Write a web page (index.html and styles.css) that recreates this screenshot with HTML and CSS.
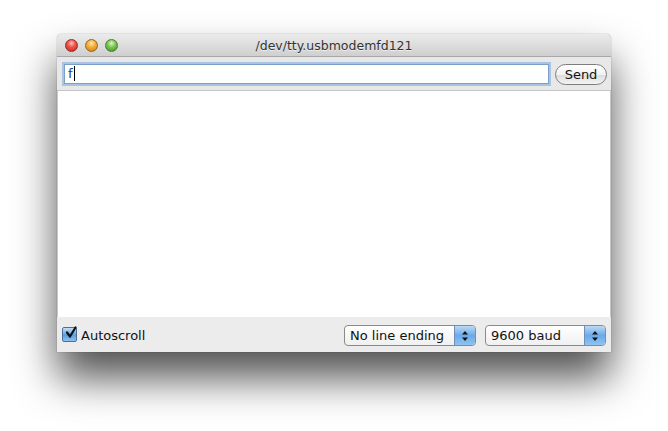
FILE: index.html
```html
<!DOCTYPE html>
<html>
<head>
<meta charset="utf-8">
<link rel="stylesheet" href="styles.css">
</head>
<body>
<div class="stage">
  <div class="window">
    <div class="titlebar">
      <div class="lights">
        <span class="light red"></span>
        <span class="light yellow"></span>
        <span class="light green"></span>
      </div>
      <div class="title">/dev/tty.usbmodemfd121</div>
    </div>
    <div class="toolbar">
      <div class="field"><span class="typed">f</span><span class="caret"></span></div>
      <div class="button">Send</div>
    </div>
    <div class="output"></div>
    <div class="statusbar">
      <label class="check">
        <span class="box"><svg width="14" height="14" viewBox="0 0 14 14"><path d="M3 6.5 L6 10.5 L11.5 1.5" fill="none" stroke="#111" stroke-width="2.2" stroke-linecap="round" stroke-linejoin="round"/></svg></span>
        <span class="check-label">Autoscroll</span>
      </label>
      <div class="spacer"></div>
      <div class="select wide"><span class="select-text">No line ending</span><span class="stepper"><svg width="8" height="12" viewBox="0 0 8 12"><path d="M4 1 L7 4.5 H1 Z M4 11 L7 7.5 H1 Z" fill="#111"/></svg></span></div>
      <div class="select narrow"><span class="select-text">9600 baud</span><span class="stepper"><svg width="8" height="12" viewBox="0 0 8 12"><path d="M4 1 L7 4.5 H1 Z M4 11 L7 7.5 H1 Z" fill="#111"/></svg></span></div>
    </div>
  </div>
</div>
</body>
</html>
```
FILE: styles.css
```css
html, body {
  margin: 0;
  padding: 0;
  background: #ffffff;
  width: 668px;
  height: 431px;
  overflow: hidden;
  font-family: "DejaVu Sans", "Liberation Sans", sans-serif;
}
.stage {
  padding: 34px 0 0 57px;
}
.window {
  width: 554px;
  height: 318px;
  display: flex;
  flex-direction: column;
  border-radius: 5px 5px 0 0;
  background: #e8e8e8;
  box-shadow: 0 26px 42px rgba(0,0,0,0.68), 0 0 1px rgba(0,0,0,0.6);
  overflow: hidden;
}
.titlebar {
  height: 22px;
  position: relative;
  background: linear-gradient(#ebebeb, #cfcfcf);
  border-bottom: 1px solid #a8a8a8;
  display: flex;
  align-items: center;
  justify-content: center;
}
.lights {
  position: absolute;
  left: 8px;
  top: 5px;
  display: flex;
  gap: 7px;
}
.light {
  width: 13px;
  height: 13px;
  border-radius: 50%;
  box-sizing: border-box;
}
.red { background: radial-gradient(circle at 50% 30%, #ffc0b8 0%, #f0564d 40%, #c0241a 100%); border: 1px solid #8e2a24; }
.yellow { background: radial-gradient(circle at 50% 30%, #ffe8b0 0%, #f5b03a 40%, #c97a10 100%); border: 1px solid #946624; }
.green { background: radial-gradient(circle at 50% 30%, #ddf7c0 0%, #7ec957 40%, #3f8f22 100%); border: 1px solid #4b7a2e; }
.title {
  font-size: 12.5px;
  color: #333;
  text-shadow: 0 1px 0 rgba(255,255,255,0.6);
  margin-top: 1px;
}
.toolbar {
  height: 33px;
  display: flex;
  align-items: center;
  padding: 0 4px 0 5px;
  gap: 6px;
  background: #e8e8e8;
  border-bottom: 1px solid #c4c4c4;
}
.field {
  flex: 1;
  height: 18px;
  background: #fff;
  border: 1px solid #7b9fc7;
  box-shadow: 0 0 0 2px #a9c4e2;
  margin-left: 2px;
  display: flex;
  align-items: center;
  padding-left: 3px;
  font-size: 13px;
  color: #1a3a9a;
}
.caret {
  width: 1px;
  height: 15px;
  background: #000;
  margin-left: 1px;
}
.button {
  width: 50px;
  height: 19px;
  border: 1px solid #7d7d7d;
  border-radius: 11px;
  background: linear-gradient(#ffffff, #f2f2f2 50%, #dcdcdc 51%, #f3f3f3);
  font-size: 13px;
  color: #111;
  display: flex;
  align-items: center;
  justify-content: center;
  margin-top: 1px;
}
.output {
  flex: 1;
  background: #fff;
  border-left: 1px solid #c8c8c8;
  border-right: 1px solid #c8c8c8;
}
.statusbar {
  height: 34px;
  display: flex;
  align-items: center;
  padding: 1px 5px 0 5px;
  background: #ececec;
}
.check {
  display: flex;
  align-items: center;
  gap: 4px;
  font-size: 13px;
  color: #111;
}
.box {
  width: 13px;
  height: 13px;
  border: 1px solid #4a6f9a;
  border-radius: 2px;
  background: linear-gradient(#c6e0f7, #5a9ee0 55%, #8cc4f2);
  position: relative;
  margin-top: -1px;
}
.box svg {
  position: absolute;
  left: 1px;
  top: -2px;
}
.spacer { flex: 1; }
.select {
  height: 19px;
  border: 1px solid #8a8a8a;
  border-radius: 4px;
  background: linear-gradient(#ffffff, #f0f0f0);
  display: flex;
  align-items: center;
  font-size: 13px;
  color: #111;
  overflow: hidden;
  margin-top: 1px;
}
.select.wide { width: 130px; margin-right: 9px; }
.select.narrow { width: 119px; }
.select-text {
  flex: 1;
  padding-left: 5px;
  white-space: nowrap;
}
.stepper {
  width: 20px;
  height: 100%;
  border-left: 1px solid #6d8fb8;
  background: linear-gradient(#bcd9f5, #6aaae8 50%, #8fc3f1 100%);
  display: flex;
  align-items: center;
  justify-content: center;
}
```
